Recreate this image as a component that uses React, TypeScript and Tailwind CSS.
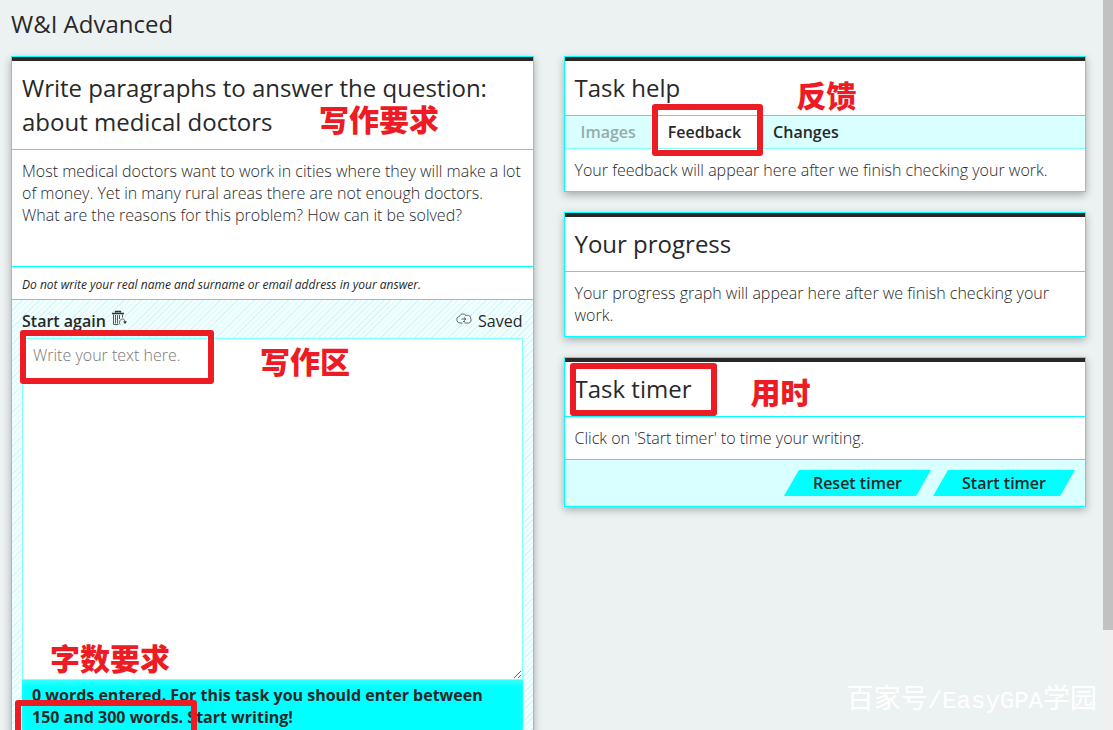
import React, { useState } from 'react';

type CardProps = {
  title: string;
  children: React.ReactNode;
};

const tabs = [
  { id: 'images', label: 'Images', disabled: true },
  { id: 'feedback', label: 'Feedback', disabled: false },
  { id: 'changes', label: 'Changes', disabled: false },
];

function Card({ title, children }: CardProps) {
  return (
    <section className="relative border border-[#00ffff] bg-white shadow-[0_3px_8px_rgba(0,0,0,0.3)]">
      <div className="border-t-4 border-[#282828] px-[10px] py-[10px]">
        <h2 className="text-2xl leading-[34px] font-medium">{title}</h2>
      </div>
      {children}
    </section>
  );
}

function Note({ className, children }: { className: string; children: React.ReactNode }) {
  return (
    <span
      className={`pointer-events-none absolute z-20 font-['Noto_Sans_CJK_SC',sans-serif] text-[30px] leading-[26px] font-black whitespace-nowrap text-[#ed1c24] ${className}`}
    >
      {children}
    </span>
  );
}

function Frame({ className }: { className: string }) {
  return <div className={`pointer-events-none absolute z-10 rounded-[3px] border-6 border-[#ed1c24] ${className}`} />;
}

function TrashIcon() {
  return (
    <svg width="15" height="16" viewBox="0 0 15 16" fill="none" stroke="#5a5a50" aria-hidden="true">
      <path d="M0 3.500h12M3.500 2.500V1.500h5v1" stroke="#333" strokeWidth="1.3" />
      <path d="M1.500 4.500v10h5M3.500 5v8.500M5.500 5v8.500M7.500 5v4M10.500 4.500v3" />
      <path d="M8 14.500c-1.500-2.500 0-5.500 2.500-5.500 1.600 0 2.500 1.200 2.500 3" />
      <path d="M11 11.500h4l-2 2.500z" fill="#333" stroke="none" />
    </svg>
  );
}

function CloudIcon() {
  return (
    <svg width="16" height="12" viewBox="0 0 16 12" fill="none" stroke="#555" strokeWidth="0.9" className="mb-1" aria-hidden="true">
      <path d="M6.500 10H4C2 10 .8 8.500 .8 6.500S2 3.500 3.500 3.500C4 1.700 5.300 1 7 1s2.500 .6 3 1.500" />
      <path d="M9.500 2.800c3-1.300 5 .2 5 2.200 1.300 1.800.5 5-2 5H8.500" />
      <path d="M5.500 6h4M8 4.500l2 1.500-2 1.500M7 8.500h2" />
    </svg>
  );
}

export default function App() {
  const [text, setText] = useState('');
  const [activeTab, setActiveTab] = useState('feedback');
  const words = text.split(/\s+/).filter(Boolean).length;

  return (
    <div className="relative flex h-screen overflow-hidden bg-[#ecf2f2] font-['Open_Sans',sans-serif] text-base leading-[22px] text-[#282828]">
      <main className="min-w-0 flex-1 pt-[7px] pr-[17px] pl-[11px]">
        <h1 className="mb-[15px] text-2xl leading-[34px] font-medium">W&amp;I Advanced</h1>

        <div className="grid grid-cols-2 items-start gap-[30px]">
          {/* Writing task */}
          <Card title="Write paragraphs to answer the question: about medical doctors">
            <Note className="top-[48px] left-[307px]">写作要求</Note>
            <p className="border-t border-[#00ffff] px-[10px] pt-[10px] pb-10 font-light">
              Most medical doctors want to work in cities where they will make a lot of money. Yet in many rural areas
              there are not enough doctors. What are the reasons for this problem? How can it be solved?
            </p>
            <p className="border-t border-[#00ffff] px-[10px] pt-[7px] pb-[3px] text-xs leading-[22px] italic">
              Do not write your real name and surname or email address in your answer.
            </p>

            <div className="relative border-t border-[#00ffff] bg-[#f0ffff] bg-[repeating-linear-gradient(135deg,#f0ffff_0px,#f0ffff_3px,#dcf5f5_3px,#dcf5f5_4px)] px-[10px] pt-[10px] pb-[10px]">
              <Frame className="top-[30px] left-[8px] h-[54px] w-[194px]" />
              <Note className="top-[47px] left-[248px]">写作区</Note>
              <Note className="top-[344px] left-[38px]">字数要求</Note>
              <Frame className="top-[400px] left-[3px] h-[54px] w-[182px]" />

              <div className="flex items-center justify-between pb-[6px]">
                <button
                  type="button"
                  onClick={() => setText('')}
                  className="flex items-start gap-[6px] font-semibold"
                >
                  Start again
                  <TrashIcon />
                </button>
                <span className="flex items-center gap-[6px] font-normal">
                  <CloudIcon />
                  Saved
                </span>
              </div>
              <textarea
                aria-label="Your text"
                value={text}
                onChange={(e) => setText(e.target.value)}
                placeholder="Write your text here."
                className="block h-[342px] w-full resize-y border border-[#80ffff] bg-white px-[10px] py-[5px] font-light placeholder:text-[#777]"
              />
              <p className="rounded-b bg-[#00ffff] px-[10px] py-1 font-bold shadow-[inset_0_4px_4px_rgba(255,255,255,0.2)]">
                {words} words entered. For this task you should enter between 150 and 300 words. Start writing!
              </p>
            </div>
          </Card>

          <div className="flex flex-col gap-5">
            {/* Task help */}
            <Card title="Task help">
              <Note className="top-[24px] left-[232px]">反馈</Note>
              <Frame className="top-[47px] left-[87px] h-[52px] w-[111px]" />
              <div className="flex border-y border-t-[#00ffff] border-b-[#80ffff] bg-[#d9ffff]">
                {tabs.map((tab) => (
                  <button
                    key={tab.id}
                    type="button"
                    disabled={tab.disabled}
                    onClick={() => setActiveTab(tab.id)}
                    className={`h-8 px-4 font-semibold disabled:text-[#96abab] ${activeTab === tab.id ? 'bg-white' : ''}`}
                  >
                    {tab.label}
                  </button>
                ))}
              </div>
              <p className="p-[10px] font-light">Your feedback will appear here after we finish checking your work.</p>
            </Card>

            {/* Progress */}
            <Card title="Your progress">
              <p className="border-t border-[#00ffff] p-[10px] font-light">
                Your progress graph will appear here after we finish checking your work.
              </p>
            </Card>

            {/* Timer */}
            <Card title="Task timer">
              <Frame className="top-[5px] left-[5px] h-[53px] w-[147px]" />
              <Note className="top-[20px] left-[186px]">用时</Note>
              <p className="border-t border-[#00ffff] p-[10px] font-light">
                Click on 'Start timer' to time your writing.
              </p>
              <div className="flex justify-end gap-[2px] border-t border-[#00ffff] bg-[#d9ffff] p-[10px]">
                <button
                  type="button"
                  className="h-[26px] bg-[#00ffff] px-[29px] font-semibold [clip-path:polygon(15px_0,100%_0,calc(100%-15px)_100%,0_100%)]"
                >
                  Reset timer
                </button>
                <button
                  type="button"
                  className="h-[26px] bg-[#00ffff] px-[29px] font-semibold [clip-path:polygon(15px_0,100%_0,calc(100%-15px)_100%,0_100%)]"
                >
                  Start timer
                </button>
              </div>
            </Card>
          </div>
        </div>
      </main>

      {/* Scrollbar */}
      <div className="w-[10px] shrink-0 bg-[#f0f0f0]">
        <div className="h-[630px] bg-[#c1c1c1]" />
      </div>

      <span className="pointer-events-none absolute right-4 bottom-3 font-['Liberation_Mono','Noto_Sans_CJK_SC',monospace] text-[27px] leading-8 text-white">
        百家号<span className="text-2xl">/EasyGPA</span>学园
      </span>
    </div>
  );
}
